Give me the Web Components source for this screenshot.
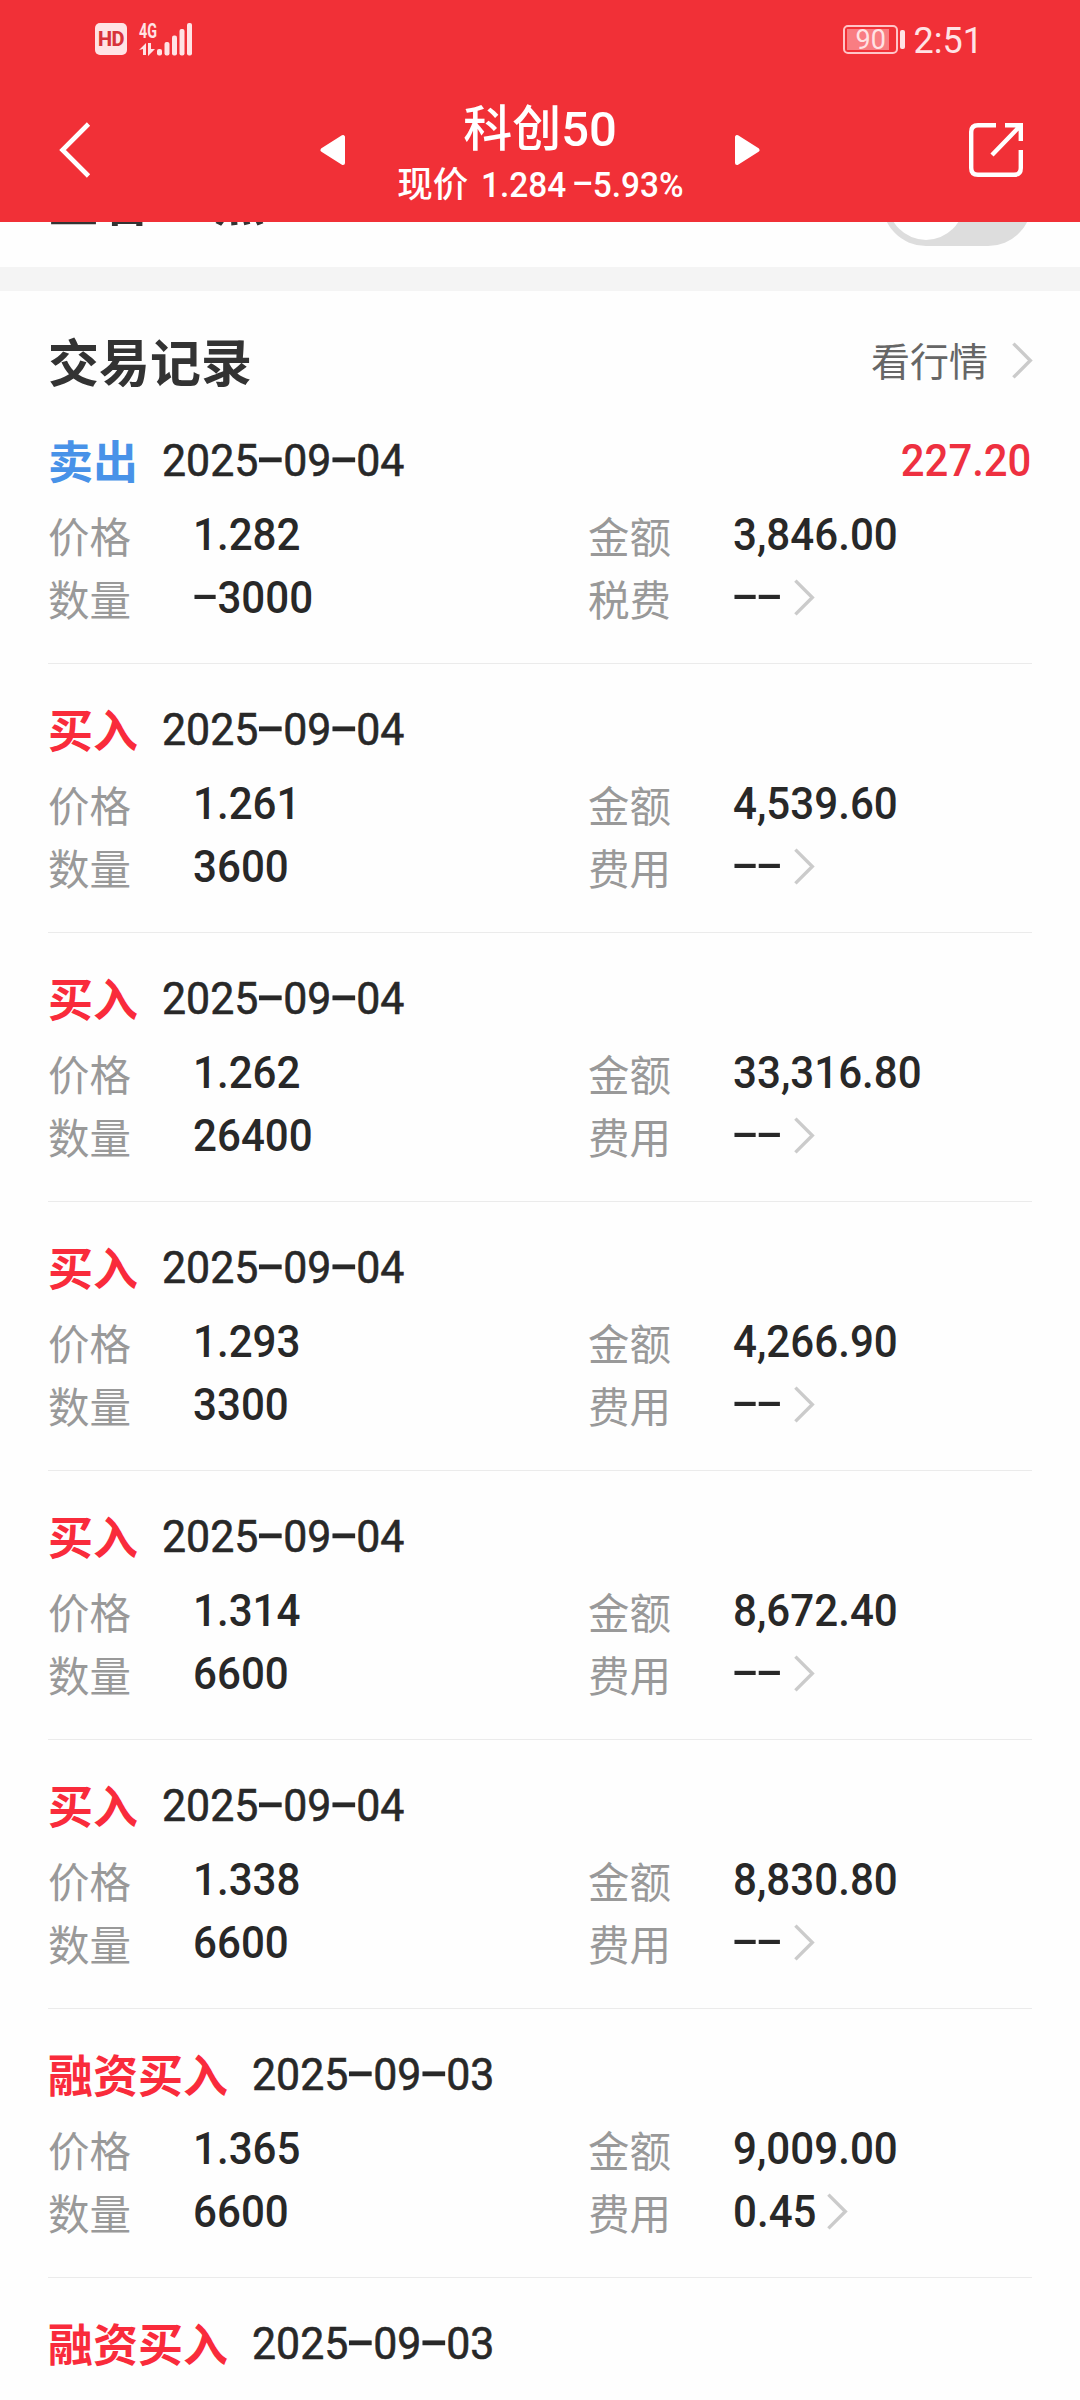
<!DOCTYPE html>
<html lang="zh-CN">
<head>
<meta charset="utf-8">
<title>科创50</title>
<style>
    html, body {
        margin: 0;
        padding: 0;
    }

    body {
        width: 1080px;
        height: 2400px;
        overflow: hidden;
        background: #fefefe;
        font-family: Roboto, "Noto Sans CJK SC", sans-serif;
        color: #282828;
    }
</style>
</head>
<body>
<trade-page></trade-page>

<script>
// Number set in a narrow face with wide dashes
class NumText extends HTMLElement {
    constructor() {
        super();
        this.attachShadow({ mode: 'open' });
    }

    connectedCallback() {
        const value = this.getAttribute('value') || '';
        this.shadowRoot.innerHTML = `
            <style>
                :host {
                    display: inline-block;
                    white-space: nowrap;
                    transform: scaleX(var(--num-scale, 0.936));
                    transform-origin: var(--num-origin, left) center;
                }

                .dash {
                    display: inline-block;
                    width: 0.58em;
                    font-weight: 500;
                    text-align: center;
                    transform: translateY(-0.075em) scaleX(1.95);
                }
            </style>${value.replace(/-/g, '<span class="dash">-</span>')}`;
    }
}

class ChevronIcon extends HTMLElement {
    constructor() {
        super();
        this.attachShadow({ mode: 'open' });
        this.shadowRoot.innerHTML = `
            <style>
                :host { display: block; width: 21px; height: 37px; }
                svg { display: block; }
            </style>
            <svg width="21" height="37" viewBox="0 0 21 37" fill="none" stroke="#cbcbcb" stroke-width="3.4">
                <path d="M1.4 1.6 L18.3 18.5 L1.4 35.4"/>
            </svg>
        `;
    }
}

class StatusBar extends HTMLElement {
    constructor() {
        super();
        this.attachShadow({ mode: 'open' });
        this.shadowRoot.innerHTML = `
            <style>
                :host {
                    display: flex;
                    justify-content: space-between;
                    height: 78px;
                    padding: 0 97px 0 95px;
                    color: #ffe3e5;
                }

                .left, .right { display: flex; align-items: center; }

                .hd {
                    width: 32px;
                    height: 32px;
                    line-height: 32px;
                    border-radius: 5px;
                    background: #ffe3e5;
                    color: #d8323a;
                    font-size: 20px;
                    font-weight: 800;
                    text-align: center;
                    letter-spacing: -0.5px;
                }

                .signal { margin-left: 12px; overflow: visible; }
                svg { display: block; }

                .battery {
                    display: flex;
                    box-sizing: border-box;
                    width: 55px;
                    height: 29px;
                    padding: 2px;
                    border: 2px solid #ffc4c7;
                    border-radius: 5px;
                }

                .level {
                    width: 42px;
                    height: 21px;
                    line-height: 22px;
                    background: #f97d82;
                    font-size: 27px;
                    text-indent: 9px;
                    white-space: nowrap;
                }

                .nub {
                    width: 5px;
                    height: 19px;
                    margin: 0 9px 0 2px;
                    border-radius: 2px;
                    background: #ffe3e5;
                }

                .time {
                    font-size: 36px;
                    line-height: 78px;
                    padding-top: 3px;
                }
            </style>
            <div class="left">
                <div class="hd">HD</div>
                <svg class="signal" width="54" height="36" viewBox="0 0 54 36" fill="#ffe3e5">
                    <text x="0" y="16.5" font-family="Roboto, sans-serif" font-size="20" font-weight="700" textLength="18" lengthAdjust="spacingAndGlyphs">4G</text>
                    <path d="M0 29 L7 22 V34 H4 V28 Z M9 22 H12 V28 L16 28 L9 35 Z"/>
                    <rect x="18" y="28" width="5" height="6.5" rx="2"/>
                    <rect x="25.5" y="21" width="5" height="13.5" rx="2"/>
                    <rect x="33" y="14.500" width="5" height="20" rx="2"/>
                    <rect x="40.500" y="8" width="5" height="26.500" rx="2"/>
                    <rect x="48" y="2" width="5" height="32.500" rx="2"/>
                </svg>
            </div>
            <div class="right">
                <div class="battery"><div class="level">90</div></div>
                <div class="nub"></div>
                <div class="time">2:51</div>
            </div>
        `;
    }
}

class NavBar extends HTMLElement {
    constructor() {
        super();
        this.attachShadow({ mode: 'open' });
        this.shadowRoot.innerHTML = `
            <style>
                :host {
                    display: flex;
                    align-items: center;
                    justify-content: space-between;
                    height: 144px;
                    padding: 0 56px 0 59px;
                    color: #fff;
                }

                svg { display: block; }
                .center { display: flex; align-items: center; }
                .text { width: 390px; padding-top: 9px; text-align: center; white-space: nowrap; }

                .title {
                    font-size: 49px;
                    font-weight: 500;
                    line-height: 60px;
                }

                .quote {
                    font-size: 35.5px;
                    font-weight: 500;
                    line-height: 50px;
                    padding-left: 14px;
                    word-spacing: -1px;
                    --num-scale: 0.94;
                }

                ::slotted(*) { display: inline-flex; gap: 13px; }
            </style>
            <svg width="53" height="56" viewBox="0 0 53 56" fill="none" stroke="#fff" stroke-width="4.600">
                <path d="M29.500 2 L3.500 28 L29.500 54"/>
            </svg>
            <div class="center">
                <svg width="25" height="32" viewBox="0 0 25 32" fill="#fff" stroke="#fff" stroke-width="4" stroke-linejoin="round">
                    <path d="M23 3 V29 L2.500 16 Z"/>
                </svg>
                <div class="text">
                    <div class="title"><slot name="title"></slot></div>
                    <div class="quote"><slot name="quote"></slot></div>
                </div>
                <svg width="25" height="32" viewBox="0 0 25 32" fill="#fff" stroke="#fff" stroke-width="4" stroke-linejoin="round">
                    <path d="M2 3 V29 L22.500 16 Z"/>
                </svg>
            </div>
            <svg width="56" height="56" viewBox="0 0 56 56" fill="none" stroke="#fff" stroke-width="4.400">
                <path d="M28 3.200 H10 Q3.200 3.200 3.200 10 V46 Q3.200 52.800 10 52.800 H46 Q52.800 52.800 52.800 46 V28"/>
                <path d="M37 3.200 H52.800 V19 M52 4 L24 33"/>
            </svg>
        `;
    }
}

// Settings row scrolled partly under the nav bar
class ToggleRow extends HTMLElement {
    constructor() {
        super();
        this.attachShadow({ mode: 'open' });
        this.shadowRoot.innerHTML = `
            <style>
                :host {
                    display: flex;
                    align-items: flex-end;
                    justify-content: space-between;
                    height: 45px;
                    padding: 0 48px 0 48px;
                    overflow: hidden;
                    border-bottom: 24px solid #f4f4f4;
                }

                .label {
                    font-size: 51px;
                    font-weight: 700;
                    line-height: 60px;
                    margin-bottom: 33px;
                    color: #333;
                }

                .switch {
                    flex: none;
                    box-sizing: border-box;
                    width: 150px;
                    height: 88px;
                    margin-bottom: 21px;
                    padding: 6px;
                    border-radius: 44px;
                    background: #ddd;
                }

                .knob { width: 76px; height: 76px; border-radius: 50%; background: #fff; }
            </style>
            <div class="label"><slot></slot></div>
            <div class="switch"><div class="knob"></div></div>
        `;
    }
}

class SectionHead extends HTMLElement {
    constructor() {
        super();
        this.attachShadow({ mode: 'open' });
        this.shadowRoot.innerHTML = `
            <style>
                :host {
                    display: flex;
                    align-items: center;
                    justify-content: space-between;
                    height: 64px;
                    padding: 39px 47px 1px 48px;
                }

                .title { padding-top: 6px; font-size: 51px; font-weight: 700; line-height: 64px; color: #333; }
                .more { display: flex; align-items: center; font-size: 39px; line-height: 64px; color: #666; }
                .more slot { display: block; padding-top: 2px; }
                chevron-icon { margin: 0 0 4px 24px; }
            </style>
            <div class="title"><slot></slot></div>
            <div class="more"><slot name="more"></slot><chevron-icon></chevron-icon></div>
        `;
    }
}

class TradeRecord extends HTMLElement {
    constructor() {
        super();
        this.attachShadow({ mode: 'open' });
    }

    set data(r) {
        const cell = (label, value, link) => `
            <div class="cell">
                <span class="label">${label}</span>
                <span class="value"><num-text value="${value}"></num-text></span>
                ${link ? `<chevron-icon class="${value === '--' ? '' : 'tight'}"></chevron-icon>` : ''}
            </div>`;
        this.shadowRoot.innerHTML = `
            <style>
                :host {
                    display: block;
                    box-sizing: border-box;
                    height: 269px;
                    margin: 0 48px;
                    padding-top: 34px;
                    border-bottom: 1px solid #ebebeb;
                    font-size: 45px;
                }

                .head {
                    display: flex;
                    align-items: center;
                    height: 64px;
                    margin-bottom: 12px;
                    padding-right: 1px;
                    line-height: 64px;
                }

                .side { padding-top: 5px; font-weight: 700; color: #f92b3b; margin-right: 24px; }
                .side.sell { color: #4892e8; }
                .date { font-weight: 400; -webkit-text-stroke: 0.6px; --num-scale: 0.952; }

                .profit {
                    margin-left: auto;
                    font-weight: 500;
                    color: #ee3040;
                    --num-origin: right;
                    --num-scale: 0.93;
                }

                .grid { display: grid; grid-template-columns: 540px 1fr; }
                .cell { display: flex; align-items: center; height: 63px; line-height: 63px; }
                .label { width: 144.500px; padding-top: 3px; font-size: 41.500px; color: #999; }
                .value { padding-bottom: 4px; font-weight: 500; }
                chevron-icon { margin: 0 0 4px 9px; }
                chevron-icon.tight { margin-left: 5px; }
            </style>
            <div class="head">
                <span class="side ${r.sell ? 'sell' : ''}">${r.side}</span>
                <span class="date"><num-text value="${r.date}"></num-text></span>
                ${r.profit ? `<span class="profit"><num-text value="${r.profit}"></num-text></span>` : ''}
            </div>
            ${r.price ? `<div class="grid">
                ${cell('价格', r.price)}
                ${cell('金额', r.amount)}
                ${cell('数量', r.count)}
                ${cell(r.sell ? '税费' : '费用', r.fee, true)}
            </div>` : ''}
        `;
    }
}

const RECORDS = [
    { side: '卖出', sell: true, date: '2025-09-04', profit: '227.20', price: '1.282', amount: '3,846.00', count: '-3000', fee: '--' },
    { side: '买入', date: '2025-09-04', price: '1.261', amount: '4,539.60', count: '3600', fee: '--' },
    { side: '买入', date: '2025-09-04', price: '1.262', amount: '33,316.80', count: '26400', fee: '--' },
    { side: '买入', date: '2025-09-04', price: '1.293', amount: '4,266.90', count: '3300', fee: '--' },
    { side: '买入', date: '2025-09-04', price: '1.314', amount: '8,672.40', count: '6600', fee: '--' },
    { side: '买入', date: '2025-09-04', price: '1.338', amount: '8,830.80', count: '6600', fee: '--' },
    { side: '融资买入', date: '2025-09-03', price: '1.365', amount: '9,009.00', count: '6600', fee: '0.45' },
    { side: '融资买入', date: '2025-09-03' }
];

class TradePage extends HTMLElement {
    constructor() {
        super();
        this.attachShadow({ mode: 'open' });
        this.shadowRoot.innerHTML = `
            <style>
                :host { display: block; height: 2400px; overflow: hidden; }
                header { height: 222px; background: #f13037; }
            </style>
            <header>
                <status-bar></status-bar>
                <nav-bar>
                    <span slot="title">科创50</span>
                    <span slot="quote">现价 <num-text value="1.284 -5.93%"></num-text></span>
                </nav-bar>
            </header>
            <toggle-row>查看BS点</toggle-row>
            <section-head>交易记录<span slot="more">看行情</span></section-head>
            <main></main>
        `;
        const list = this.shadowRoot.querySelector('main');
        RECORDS.forEach(r => {
            const el = document.createElement('trade-record');
            el.data = r;
            list.appendChild(el);
        });
    }
}

customElements.define('num-text', NumText);
customElements.define('chevron-icon', ChevronIcon);
customElements.define('status-bar', StatusBar);
customElements.define('nav-bar', NavBar);
customElements.define('toggle-row', ToggleRow);
customElements.define('section-head', SectionHead);
customElements.define('trade-record', TradeRecord);
customElements.define('trade-page', TradePage);
</script>
</body>
</html>
